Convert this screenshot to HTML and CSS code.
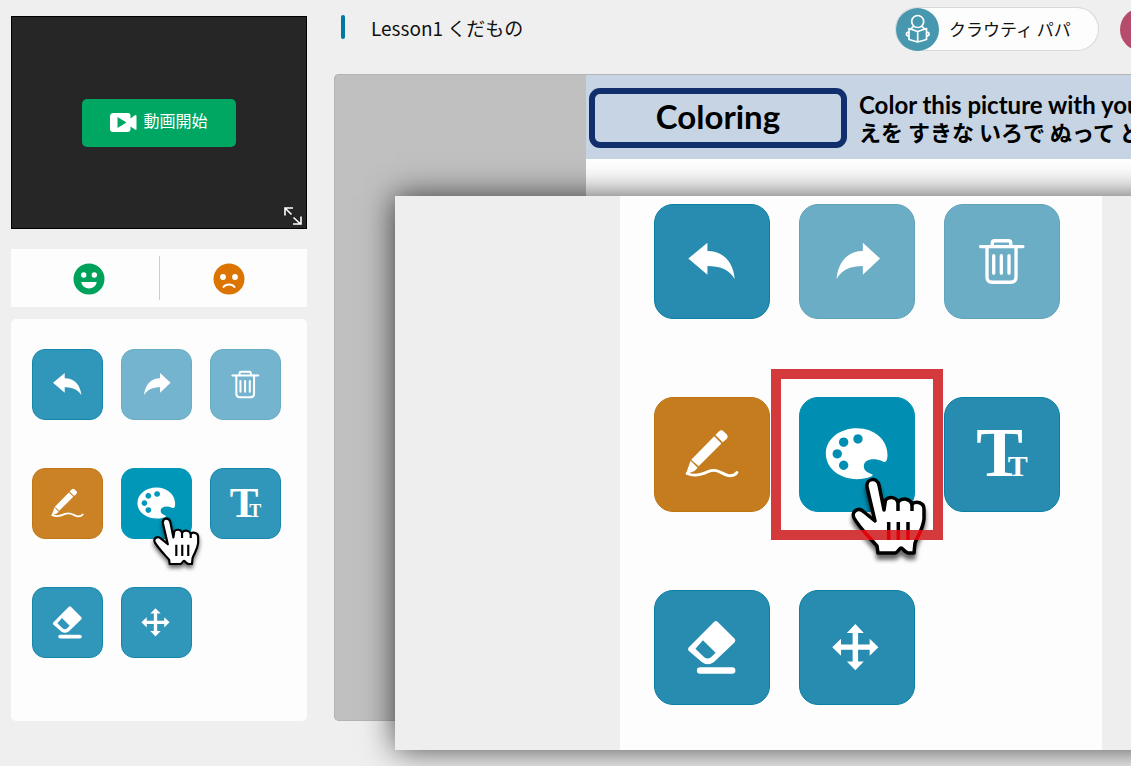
FILE: index.html
```html
<!DOCTYPE html>
<html lang="ja">

<head>
    <meta charset="UTF-8">
    <meta name="viewport" content="width=device-width, initial-scale=1.0">
    <title>Lesson1 くだもの</title>
    <link rel="stylesheet" href="styles.css">
</head>

<body>
    <!-- Iconos compartidos por las dos paletas de herramientas -->
    <svg class="sprite" aria-hidden="true">
        <symbol id="undo" viewBox="0 0 116 116">
            <path fill="currentColor" d="M33.7 55 53.3 38.7V47.3C70 47.5 80 59 81.3 76 75 66 66 62.7 53.3 62.7V71.7Z" />
        </symbol>
        <symbol id="redo" viewBox="0 0 116 116">
            <path fill="currentColor" d="M81.7 55 64 38.7V47.3C48 47.5 38.5 59 37 76 43 66 52 62.7 64 62.7V71.7Z" />
        </symbol>
        <symbol id="trash" viewBox="0 0 116 116">
            <g fill="none" stroke="currentColor" stroke-width="3.4" stroke-linecap="round">
                <path d="M36 42.7H79.5M48 42V39Q48 36.7 50.5 36.7H64.5Q67 36.7 67 39V42" />
                <path d="M42.6 43V74Q42.6 79.3 48 79.3H67Q72.4 79.3 72.4 74V43M49.5 52V70M57.3 52V70M65.2 52V70" />
            </g>
        </symbol>
        <symbol id="pen" viewBox="0 0 116 116">
            <g fill="currentColor">
                <path d="M36.7 63.3 60.3 39.3 67.7 46.7 44.3 70ZM61.5 38 65 34.4Q67.5 32 70 34.4L72.7 37Q75.3 39.6 73 42L69 45.3ZM36 64.5 43.3 71.7 40 75 31 78.5 33 73Z" />
            </g>
            <path fill="none" stroke="currentColor" stroke-width="3" stroke-linecap="round" d="M32.5 77.5C40 81 48 78.5 54 75.5 64 71.5 68 78.5 75 79.7 79 80 82 78.5 83.5 76.5" />
        </symbol>
        <symbol id="palette" viewBox="0 0 116 116">
            <path fill="currentColor" fill-rule="evenodd" d="M58 31C76 31 89.3 43 89.3 58 89.3 66 87 66.5 84 65 75 61 65 63 65 70 65 75 70 77 74 78.5 75 81 65 83.3 58 83.3 40 83.3 26 72 26 57 26 42 40 31 58 31ZM44.3 40.5a4.8 4.8 0 1 0 .01 0ZM59 37.2a4.8 4.8 0 1 0 .01 0ZM37.7 52.5a4.8 4.8 0 1 0 .01 0ZM44.3 64.2a4.8 4.8 0 1 0 .01 0Z" />
        </symbol>
        <symbol id="eraser" viewBox="0 0 116 116">
            <path fill="currentColor" fill-rule="evenodd" d="M60.3 31.5Q62 30 63.7 31.5L81.3 49Q82.7 50.7 81.3 52.5L60 73Q53.5 77.5 47.5 73L34 61.3Q32.7 59.7 34 58ZM48.7 50.5 41 59.3 50 68Q53.5 70.7 57 68L61.7 63.3Z" />
            <path stroke="currentColor" stroke-width="6.6" stroke-linecap="round" d="M45.8 81.7H78.7" />
        </symbol>
        <symbol id="move" viewBox="0 0 116 116">
            <path fill="currentColor" d="M56.3 34 65 43H59.1V54.9H71V49L80 57.7 71 66.4V60.4H59.1V72.3H65L56.3 81.4 47.6 72.3H53.5V60.4H41.6V66.4L32.6 57.7 41.6 49V54.9H53.5V43H47.6Z" />
        </symbol>
        <symbol id="hand" viewBox="0 0 76 84">
            <path class="hand-shape" d="M24 44 16 10C15 1 26 0 28 8L33 33 34.5 23C38 19 45 20 47 25 52 20 59 22 61 27 65 24 73 25 73 32V42C72 52 67 58 64 66L63 76H57C53 75 52 71 50 71 48 71 47 76 44 76H27L26 69C18 60 8 50 3 41 0 35 7 29 13 35Z" />
            <path class="hand-lines" d="M47 25V34M61 27V34M37.7 45V63M47.3 45V63M57 45V63" />
        </symbol>
    </svg>

    <aside class="sidebar">
        <section class="video">
            <button class="video-start">
                <svg width="27" height="20" viewBox="0 0 27 20" aria-hidden="true">
                    <path fill="#fff" fill-rule="evenodd" d="M3.5 0H18Q20.5 0 20.5 3V5.5L25 2.2Q26.5 1.8 26.5 3V16Q26.5 17.5 25 16.6L20.5 13.5V16Q20.5 19 17.5 19H3Q0 19 0 16V3.5Q0 0 3.5 0ZM7.5 4V15L16.5 9.5Z" />
                </svg>
                <span>動画開始</span>
            </button>
            <button class="expand" aria-label="拡大">
                <svg width="18" height="18" viewBox="0 0 18 18" fill="none" stroke="#fff" stroke-width="1.6" aria-hidden="true">
                    <path d="M9 1H1V8.500M1 1 7.500 7.500M9.500 10.500 16.500 17M17 9.500V17H9" />
                </svg>
            </button>
        </section>

        <section class="reactions">
            <button aria-label="わかった">
                <svg width="32" height="32" viewBox="0 0 32 32" aria-hidden="true">
                    <circle cx="16" cy="16" r="15.500" fill="#00a25b" />
                    <circle cx="10.700" cy="12" r="2.700" fill="#fff" />
                    <circle cx="21.300" cy="12" r="2.700" fill="#fff" />
                    <path fill="#fff" d="M8.300 19H23.700C22.500 27.500 9.500 27.500 8.300 19Z" />
                </svg>
            </button>
            <button aria-label="わからない">
                <svg width="32" height="32" viewBox="0 0 32 32" aria-hidden="true">
                    <circle cx="16" cy="16" r="15.500" fill="#db7400" />
                    <circle cx="10" cy="14" r="2.900" fill="#fff" />
                    <circle cx="22" cy="14" r="2.900" fill="#fff" />
                    <path fill="none" stroke="#fff" stroke-width="2" stroke-linecap="round" d="M10.500 24C13 20.700 19 20.700 21.500 24" />
                </svg>
            </button>
        </section>

        <section class="tools">
            <div class="tool-grid">
                <button class="tool" aria-label="元に戻す"><svg><use href="#undo" /></svg></button>
                <button class="tool off" aria-label="やり直す"><svg><use href="#redo" /></svg></button>
                <button class="tool off" aria-label="削除"><svg><use href="#trash" /></svg></button>
                <button class="tool pen" aria-label="ペン"><svg><use href="#pen" /></svg></button>
                <div class="picked">
                    <button class="tool active" aria-label="色"><svg><use href="#palette" /></svg></button>
                    <svg class="hand" aria-hidden="true"><use href="#hand" /></svg>
                </div>
                <button class="tool text" aria-label="文字"><span class="big">T</span><span class="small">T</span></button>
                <button class="tool" aria-label="消しゴム"><svg><use href="#eraser" /></svg></button>
                <button class="tool" aria-label="移動"><svg><use href="#move" /></svg></button>
            </div>
        </section>
    </aside>

    <main class="lesson">
        <header class="lesson-header">
            <h1>Lesson1 くだもの</h1>
            <div class="member">
                <span class="avatar">
                    <svg width="26" height="30" viewBox="0 0 26 30" fill="none" stroke="#fff" stroke-width="1.700" stroke-linejoin="round" aria-hidden="true">
                        <circle cx="12.700" cy="7.500" r="6" />
                        <path d="M12.700 17.500 4 14.500V25.500L12.700 28 21.500 25.500V14.500ZM12.700 17.500V28M4 18Q1 18 1.500 21L4 22.500M21.500 18Q24.500 18 24 21L21.500 22.500M6.500 15Q7 12.500 9 12.800M19 15Q18.500 12.500 16.500 12.800" />
                    </svg>
                </span>
                <span class="name">クラウティ パパ</span>
            </div>
            <span class="avatar second"></span>
        </header>

        <section class="board">
            <div class="sheet">
                <div class="sheet-header">
                    <h2>Coloring</h2>
                    <div class="task">
                        <p lang="en">Color this picture with you</p>
                        <p>えを すきな いろで ぬって ど</p>
                    </div>
                </div>
            </div>
        </section>
    </main>

    <!-- Vista ampliada de las herramientas -->
    <section class="zoomed">
        <div class="zoomed-panel">
            <div class="tool-grid">
                <button class="tool" aria-label="元に戻す"><svg><use href="#undo" /></svg></button>
                <button class="tool off" aria-label="やり直す"><svg><use href="#redo" /></svg></button>
                <button class="tool off" aria-label="削除"><svg><use href="#trash" /></svg></button>
                <button class="tool pen" aria-label="ペン"><svg><use href="#pen" /></svg></button>
                <div class="picked">
                    <button class="tool active" aria-label="色"><svg><use href="#palette" /></svg></button>
                    <svg class="hand" aria-hidden="true"><use href="#hand" /></svg>
                    <span class="frame"></span>
                    <svg class="hand tinted" aria-hidden="true"><use href="#hand" /></svg>
                </div>
                <button class="tool text" aria-label="文字"><span class="big">T</span><span class="small">T</span></button>
                <button class="tool" aria-label="消しゴム"><svg><use href="#eraser" /></svg></button>
                <button class="tool" aria-label="移動"><svg><use href="#move" /></svg></button>
            </div>
        </div>
    </section>
</body>

</html>
```
FILE: styles.css
```css
* {
    box-sizing: border-box;
}

body {
    position: relative;
    display: flex;
    gap: 27px;
    min-height: 100vh;
    margin: 0;
    padding: 0 0 45px 11px;
    overflow: hidden;
    font-family: "Noto Sans CJK JP", sans-serif;
    color: #111;
    background-color: #efefef;
}

button {
    padding: 0;
    border: none;
    font-family: inherit;
    cursor: pointer;
}

.sprite {
    position: absolute;
    width: 0;
    height: 0;
}

/* Barra lateral */
.sidebar {
    display: flex;
    flex-direction: column;
    flex: 0 0 296px;
    padding-top: 16px;
}

.video {
    position: relative;
    display: flex;
    align-items: center;
    justify-content: center;
    height: 213px;
    border: 1px solid #000;
    background-color: #262626;
}

.video-start {
    display: flex;
    align-items: center;
    justify-content: center;
    gap: 6px;
    width: 154px;
    height: 48px;
    border-radius: 5px;
    color: white;
    font-size: 16px;
    background-color: #00a762;
}

.video-start span {
    padding-bottom: 6px;
}

.expand {
    position: absolute;
    right: 4px;
    bottom: 3px;
    width: 18px;
    height: 18px;
    background: none;
}

.expand svg {
    display: block;
}

.reactions {
    display: flex;
    height: 58px;
    margin: 20px 0 12px;
    padding: 7px 0;
    background-color: #fdfdfd;
}

.reactions button {
    display: flex;
    flex: 1;
    align-items: center;
    justify-content: center;
    padding: 2px 0 0 8px;
    background: none;
}

.reactions button + button {
    padding: 2px 8px 0 0;
    border-left: 1px solid #ccc;
}

.tools {
    flex: 1;
    padding: 30px 21px;
    border-radius: 5px;
    background-color: #fdfdfd;
}

/* Herramientas */
.tool-grid {
    display: grid;
    grid-template-columns: repeat(3, 71px);
    grid-auto-rows: 71px;
    gap: 48px 18px;
}

.tool {
    position: relative;
    display: block;
    width: 100%;
    height: 100%;
    border: 1px solid #1686aa;
    border-radius: 13px;
    color: white;
    background-color: #3197ba;
}

.tool svg {
    display: block;
    width: 100%;
    height: 100%;
}

.tool.off {
    border-color: #68adc7;
    background-color: #74b4ce;
}

.tool.pen {
    border-color: #c27717;
    background-color: #ca8225;
}

.tool.active {
    border-color: #0097b9;
    background-color: #0097b9;
}

.tool.text {
    display: flex;
    align-items: baseline;
    justify-content: center;
    padding-top: 12px;
    font-family: "Liberation Serif", serif;
    font-weight: bold;
    line-height: 1;
}

.tool .big {
    font-size: 43px;
}

.tool .small {
    margin-left: -9px;
    font-size: 18px;
}

.picked {
    position: relative;
}

.hand {
    position: absolute;
    top: 49px;
    left: 32px;
    width: 47px;
    height: 52px;
    pointer-events: none;
    filter: drop-shadow(0 3px 2px rgba(0, 0, 0, 0.6));
}

.hand-shape,
.hand-lines {
    fill: none;
    stroke: var(--hand-line, black);
    stroke-width: 3.5;
    stroke-linejoin: round;
}

.hand-shape {
    fill: var(--hand-fill, white);
}

/* Leccion */
.lesson {
    display: flex;
    flex-direction: column;
    flex: 1;
    min-width: 0;
}

.lesson-header {
    display: flex;
    align-items: center;
    height: 58px;
    margin-bottom: 16px;
    padding-left: 7px;
}

h1 {
    display: flex;
    align-items: center;
    gap: 26px;
    margin: 0 auto 4px 0;
    font-size: 19px;
    font-weight: normal;
    white-space: nowrap;
}

h1::before {
    content: "";
    width: 4px;
    height: 24px;
    border-radius: 2px;
    background-color: #0079a0;
}

.member {
    display: flex;
    align-items: center;
    width: 202px;
    height: 42px;
    margin-right: 22px;
    border-radius: 21px;
    background-color: #fdfdfd;
    box-shadow: 0 0 0 1px #d8d8d8;
}

.avatar {
    display: flex;
    flex: 0 0 43px;
    align-items: center;
    justify-content: center;
    height: 43px;
    border-radius: 50%;
    background-color: #4798ae;
}

.avatar.second {
    margin-right: -32px;
    background-color: #b64c6c;
}

.name {
    margin-left: 10px;
    padding-bottom: 2px;
    font-size: 17px;
    white-space: nowrap;
}

.board {
    flex: 1;
    padding-left: 252px;
    border-radius: 5px 0 0 5px;
    background-color: #c0c0c0;
    box-shadow: inset 0 0 0 1px #b4b4b4;
}

.sheet {
    height: 100%;
    overflow: hidden;
    border-top: 1px solid #b4b4b4;
    background-color: white;
}

.sheet-header {
    display: flex;
    align-items: center;
    gap: 12px;
    height: 84px;
    padding: 2px 0 0 3px;
    background-color: #c6d4e4;
}

h2 {
    flex: 0 0 258px;
    height: 60px;
    margin: 0;
    border: 6px solid #122f6d;
    border-radius: 11px;
    color: black;
    font: bold 33px/44px Lato, sans-serif;
    text-align: center;
}

.task p {
    margin: 0;
    color: black;
    font: bold 22px/26px "Noto Sans CJK JP", sans-serif;
    white-space: nowrap;
}

.task p:lang(en) {
    font: bold 24px/26px Lato, sans-serif;
}

/* Vista ampliada: sigue mas alla del borde derecho */
.zoomed {
    position: absolute;
    top: 196px;
    right: -40px;
    bottom: 16px;
    left: 395px;
    padding: 0 69px 0 225px;
    background-color: #eee;
    box-shadow: 0 0 30px rgba(0, 0, 0, 0.7);
}

.zoomed-panel {
    height: 100%;
    padding: 8px 34px;
    background-color: #fdfdfd;
}

.zoomed .tool-grid {
    grid-template-columns: repeat(3, 116px);
    grid-auto-rows: 115px;
    gap: 78px 29px;
}

.zoomed .tool {
    border-radius: 19px;
    border-color: #087fa4;
    background-color: #278cb0;
}

.zoomed .tool.off {
    border-color: #62a3bc;
    background-color: #6cadc6;
}

.zoomed .tool.pen {
    border-color: #c0750f;
    background-color: #c47c1e;
}

.zoomed .tool.active {
    border-color: #008fb2;
    background-color: #008fb2;
}

.zoomed .tool.text {
    padding-top: 20px;
}

.zoomed .big {
    font-size: 70px;
}

.zoomed .small {
    margin-left: -15px;
    font-size: 30px;
}

.zoomed .hand {
    top: 80px;
    left: 52px;
    width: 76px;
    height: 84px;
    filter: drop-shadow(0 5px 2px rgba(0, 0, 0, 0.6));
}

.frame {
    position: absolute;
    inset: -28px;
    border: 10px solid #d43a3c;
}

/* Parte de la mano que queda bajo el marco */
.zoomed .hand.tinted {
    --hand-fill: #d43a3c;
    --hand-line: #e00008;
    clip-path: inset(53px 0 21px 0);
    filter: none;
}
```
